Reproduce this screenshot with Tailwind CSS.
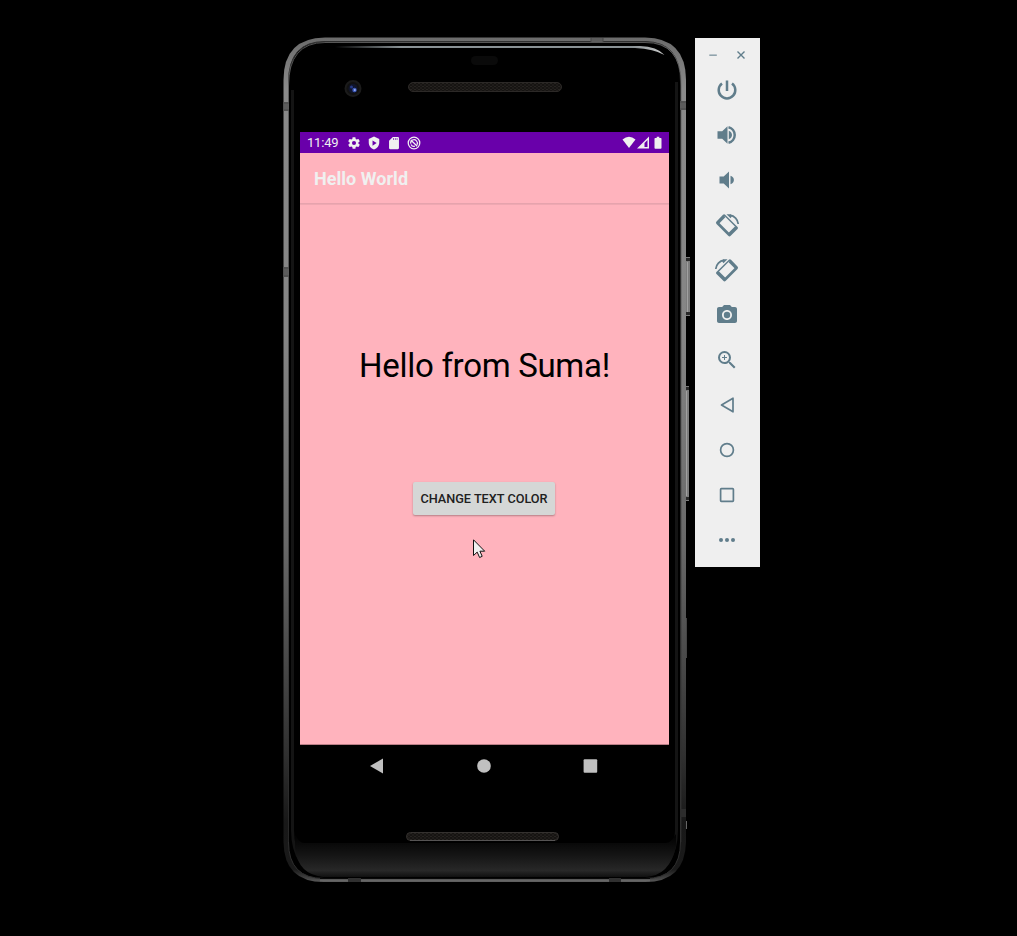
<!DOCTYPE html>
<html lang="en">
<head>
<meta charset="utf-8">
<title>Emulator</title>
<script src="https://cdn.jsdelivr.net/npm/@tailwindcss/browser@4"></script>
</head>
<body class="bg-black h-[936px] overflow-hidden font-['Roboto',sans-serif]">
<main class="flex items-start pl-[283px] pt-[37px]">
  <section class="relative w-[412px] h-[846px] shrink-0 pl-[17px] pt-[95px]">
    <!-- device body -->
    <svg class="absolute left-0 top-0" width="412" height="846" viewBox="283 37 412 846" fill="none">
      <defs>
        <linearGradient id="rim" gradientUnits="userSpaceOnUse" x1="0" y1="38" x2="0" y2="882">
          <stop offset="0" stop-color="#6c6c6c"/><stop offset=".06" stop-color="#8a8a8a"/><stop offset=".35" stop-color="#858585"/>
          <stop offset=".6" stop-color="#686868"/><stop offset=".85" stop-color="#303030"/><stop offset=".93" stop-color="#181818"/><stop offset=".985" stop-color="#1a1a1a"/><stop offset=".996" stop-color="#444"/><stop offset="1" stop-color="#5c5c5c"/>
        </linearGradient>
        <linearGradient id="inner" gradientUnits="userSpaceOnUse" x1="0" y1="42" x2="0" y2="842">
          <stop offset="0" stop-color="#747474"/><stop offset=".5" stop-color="#606060"/><stop offset="1" stop-color="#222"/>
        </linearGradient>
        <linearGradient id="chin" x1="0" y1="0" x2="0" y2="1">
          <stop offset="0" stop-color="#000"/><stop offset=".25" stop-color="#0a0a0a"/><stop offset=".5" stop-color="#151515"/><stop offset=".85" stop-color="#282828"/><stop offset="1" stop-color="#101010"/>
        </linearGradient>
        <linearGradient id="shine" gradientUnits="userSpaceOnUse" x1="335" y1="0" x2="665" y2="0">
          <stop offset="0" stop-color="#8a9296" stop-opacity="0"/><stop offset=".2" stop-color="#8a9296"/><stop offset=".9" stop-color="#8a9296"/><stop offset="1" stop-color="#ccc"/>
        </linearGradient>
        <pattern id="mesh" width="4" height="3" patternUnits="userSpaceOnUse"><rect width="4" height="3" fill="#161412"/><path d="M0 1h2M2 2.500h2" stroke="#272421"/></pattern>
        <clipPath id="body"><path d="M325 37.500H645Q686 38 686 80V842Q685 882 645 882H324Q284 882 283.500 842V80Q283.500 38 325 37.500Z"/></clipPath>
      </defs>
      <path d="M684 257h6v59h-6zM684 386h5v115h-5z" fill="#7c7c7c"/>
      <path d="M687.500 262v50M686.500 391v105" stroke="#a0a0a0"/>
      <path d="M686 258h4v3h-4zM686 312h4v3h-4zM685 387h4v3h-4zM685 497h4v3h-4z" fill="#282828"/>
      <path d="M686.500 618v40" stroke="#444"/><path d="M686.500 821v8" stroke="#666"/>
      <g clip-path="url(#body)">
        <path d="M283 37H687V883H283Z" fill="url(#rim)"/>
        <path d="M325 41.500H645Q680.500 42 680.500 82V842Q680.500 878.500 645 878.500H324Q288.500 878.500 288.500 842V82Q288.500 41.500 325 41.500Z" fill="#000" stroke="#303030"/>
        <path d="M325 42.500H645Q681.500 42 681.500 86V842" stroke="url(#inner)" stroke-opacity=".75"/>
        <path d="M325 42.500Q288.500 42.500 288.500 86V842" stroke="url(#inner)" stroke-opacity=".7"/>
        <path d="M292.500 90V830Q293 870 324 875.500M676.500 82V830Q676 870 645 875.500" stroke="#141414" stroke-width="3"/>
        <path d="M295 834Q299 843 304 843H666Q671 843 676 834V846Q670 876 645 877H324Q298 875 295 848Z" fill="url(#chin)"/>
        <path d="M320 878.500H650" stroke="#080808"/>
        <path d="M320 880.500H650" stroke="#666" stroke-width="2"/>
        <path d="M283 102h6v9h-6zM680 101h6v9h-6zM283 267h6v10h-6zM591 38h12v4h-12z" fill="#5c5c5c"/>
        <path d="M680 809h6v8h-6z" fill="#2c2c2c"/>
        <path d="M283 103h6M283 110h6M680 102h6M680 109h6M283 268h6M283 276h6M591 38v4M603 38v4" stroke="#484848"/>
        <path d="M348 878h13v4h-13zM609 878h12v4h-12z" fill="#303030"/>
      </g>
      <path d="M335 46H640Q657 46.500 664.500 55Q654 49 635 48H335Z" fill="url(#shine)"/>
      <rect x="471" y="56" width="27" height="9" rx="4.500" fill="#0a0a0a"/>
      <circle cx="353" cy="88.500" r="7.500" fill="#111" stroke="#1b1b1b" stroke-width="2"/>
      <circle cx="353" cy="88.500" r="4.500" fill="#10152c"/><circle cx="351.500" cy="87" r="1.500" fill="#253985"/><circle cx="354.500" cy="90" r="2.200" fill="#3f5bb8"/><circle cx="354.800" cy="90" r="1" fill="#9bb2ff"/>
      <rect x="408.500" y="82.500" width="153" height="9" rx="4.500" fill="url(#mesh)" stroke="#2c2927"/>
      <rect x="406.500" y="832.500" width="152" height="8" rx="4" fill="url(#mesh)" stroke="#34312f"/><path d="M410 840.500H555" stroke="#565454"/>
    </svg>

    <!-- screen -->
    <div class="relative w-[369px] flex flex-col">
      <div class="h-[21px] bg-[#6900aa] flex items-center justify-between text-[#f0f0f0]">
        <div class="flex items-center pl-[7px]">
          <span class="w-[40px] text-[13px] leading-[21px] tracking-[-0.2px]">11:49</span>
          <div class="flex gap-[6px] items-center">
            <svg width="14" height="14" viewBox="0 0 24 24" fill="currentColor"><path d="M19.430 12.980c.04-.32.07-.64.07-.98s-.03-.66-.07-.98l2.110-1.650c.19-.15.24-.42.12-.64l-2-3.460c-.12-.22-.39-.3-.61-.22l-2.490 1c-.52-.4-1.080-.73-1.690-.98l-.38-2.650A.49.49 0 0014 2h-4c-.25 0-.46.18-.49.42l-.38 2.650c-.61.25-1.170.59-1.690.98l-2.490-1c-.23-.09-.49 0-.61.22l-2 3.460c-.13.22-.07.49.12.64l2.110 1.650c-.04.32-.07.65-.07.98s.03.66.07.98l-2.110 1.650c-.19.15-.24.42-.12.64l2 3.460c.12.22.39.3.61.22l2.490-1c.52.4 1.080.73 1.690.98l.38 2.650c.03.24.24.42.49.42h4c.25 0 .46-.18.49-.42l.38-2.650c.61-.25 1.170-.59 1.690-.98l2.490 1c.23.09.49 0 .61-.22l2-3.460c.12-.22.07-.49-.12-.64l-2.110-1.650zM12 15.500A3.500 3.500 0 1112 8.500a3.500 3.500 0 010 7z"/></svg>
            <svg width="14" height="14" viewBox="0 0 24 24" fill="currentColor" fill-rule="evenodd"><path d="M12 1L3 5v6c0 5.550 3.840 10.740 9 12 5.160-1.260 9-6.450 9-12V5zM9.500 7.500L16.500 12l-7 4.500z"/></svg>
            <svg width="14" height="14" viewBox="0 0 24 24" fill="currentColor" fill-rule="evenodd"><path d="M18.500 1.500h-8.500L3.500 8V20.500c0 1.100.9 2 2 2H18.500c1.100 0 2-.9 2-2V3.500c0-1.100-.9-2-2-2zm-6.500 5h-1.500V4H12v2.500zm3 0h-1.500V4H15v2.500zm3 0h-1.500V4H18v2.500z"/></svg>
            <svg width="14" height="14" viewBox="0 0 24 24" fill="none" stroke="currentColor" stroke-width="2.200"><circle cx="12" cy="12" r="9.900"/><path d="M6.400 13a5.600 5.600 0 0 1 9.800-4.600 5.600 5.600 0 0 1 1 6.600M6.500 7l11 10.500M7 14.500a5.400 5.400 0 0 0 6.500 2.900"/></svg>
          </div>
        </div>
        <svg width="40" height="14" viewBox="622 135.500 40 14" fill="currentColor" class="mr-[7px]">
          <path d="M622.500 139Q629 133.500 635.500 139L629 147.500Z"/>
          <path fill-rule="evenodd" d="M637 148L649 136V148ZM644.500 146.500H647.500V139.500L644.500 142.500Z"/>
          <path d="M656.700 136.200h2.600v1.300h1.400q.8 0 .8.800v9q0 1-.8 1h-5.400q-.8 0-.8-1v-9q0-.8.8-.8h1.400z"/>
        </svg>
      </div>
      <div class="h-[51px] bg-[#ffb3bd] flex items-center pl-[14px] border-b border-[#e6a3ad]">
        <h1 class="text-[18px] font-bold text-[#f0f0f0] leading-none pt-[2px] tracking-[0.03px] whitespace-nowrap">Hello World</h1>
      </div>
      <div class="h-[541px] bg-[#ffb3bd] border-t border-t-[#efa8b2] border-b border-b-[#b97e86] flex flex-col items-center pt-[141px]">
        <p class="text-[33px] leading-[40px] tracking-[-0.3px] text-black whitespace-nowrap">Hello from Suma!</p>
        <button class="mt-[96px] mr-px w-[142px] h-[33px] rounded-[2px] bg-[#d5d7d6] text-[#202020] text-[12.700px] font-medium shadow-[0_1px_2px_rgba(0,0,0,0.3)] whitespace-nowrap">CHANGE TEXT COLOR</button>
      </div>
      <nav class="h-[42px] flex items-center justify-between pl-[69px] pr-[71px] text-[#c0c0c0]">
        <svg width="16" height="16" viewBox="0 0 16 16" fill="currentColor"><path d="M1 8L14 .5V15.500Z"/></svg>
        <svg width="16" height="16" viewBox="0 0 16 16" fill="currentColor"><circle cx="8" cy="8" r="6.800"/></svg>
        <svg width="16" height="16" viewBox="0 0 16 16" fill="currentColor"><rect x="1.600" y="1.200" width="13.600" height="13.600" rx="1"/></svg>
      </nav>
    </div>
    <!-- pointer -->
    <svg class="absolute left-[190px] top-[502px]" width="14" height="21" viewBox="0 0 14 21"><path d="M.5.8V16.500L4.200 13.100 6.600 18.500 9.200 17.300 6.900 12.200H11.700Z" fill="#f0f0f0" stroke="#111" stroke-width="1"/></svg>
  </section>

  <aside class="mt-px w-[65px] h-[529px] bg-[#efefef] text-[#607d8b] flex flex-col items-center">
    <div class="h-[29px] pt-[12px] flex gap-[18px] mr-[2px]">
      <svg width="10" height="10" viewBox="0 0 10 10" stroke="currentColor" stroke-width="1.500" opacity=".7"><path d="M1.300 5.200h7.500"/></svg>
      <svg width="10" height="10" viewBox="0 0 10 10" stroke="currentColor" stroke-width="1.400"><path d="M1.500 1.600l7 7M8.500 1.600l-7 7"/></svg>
    </div>
    <div class="flex flex-col gap-[21px] mt-[11px] ml-[-1px]">
      <svg width="24" height="24" viewBox="0 0 24 24" fill="none" stroke="currentColor" stroke-width="2.500"><path d="M12 2.500V13M7 5.500a8.300 8.300 0 1 0 10 0"/></svg>
      <svg width="24" height="24" viewBox="0 0 24 24" fill="currentColor"><path d="M2.500 8.200v7.600h4.700l5.300 5V3.200l-5.300 5zM17 12c0-1.900-1-3.400-3.200-4.300v8.600c2.200-.9 3.200-2.400 3.200-4.300z"/><path d="M13.500 4.200a8 8 0 0 1 0 15.600" fill="none" stroke="currentColor" stroke-width="2.500"/></svg>
      <svg width="24" height="24" viewBox="0 0 24 24" fill="currentColor"><path d="M4.500 8.500v7h4.200l5.300 5V3.500L8.700 8.500zM18.900 12c0-1.900-1-3.500-3.400-4.200v8.400c2.400-.7 3.400-2.300 3.400-4.200z"/></svg>
      <svg width="24" height="24" viewBox="0 0 24 24"><path fill="currentColor" fill-rule="evenodd" d="M8 1.700Q9.200.7 10.400 1.900L22.600 14.100Q23.500 15 22.500 16L15.700 22.800Q14.500 24 13.200 22.700L1.500 11Q.3 9.700 1.500 8.400ZM9.700 3.200L3.600 9.300 14.600 20.300 20.700 14.200Z"/><path d="M2 9.200L8.700 2.500 10.400 4.200 3.700 10.900ZM13.600 19.800L20.200 13.200 22 15 15.300 21.700Z" fill="currentColor"/><path d="M15 2.200A9.800 9.800 0 0 1 23.200 11" fill="none" stroke="currentColor" stroke-width="1.700"/><path d="M11.500 1.300L15.500 1.200 17 3 15.600 5.300Z" fill="currentColor"/></svg>
      <svg width="24" height="24" viewBox="0 0 24 24"><g transform="translate(24 0) scale(-1 1)"><path fill="currentColor" fill-rule="evenodd" d="M8 1.700Q9.200.7 10.400 1.900L22.600 14.100Q23.500 15 22.500 16L15.700 22.800Q14.500 24 13.200 22.700L1.500 11Q.3 9.700 1.500 8.400ZM9.700 3.200L3.600 9.300 14.600 20.300 20.700 14.200Z"/><path d="M2 9.200L8.700 2.500 10.400 4.200 3.700 10.900ZM13.600 19.800L20.200 13.200 22 15 15.300 21.700Z" fill="currentColor"/><path d="M15 2.200A9.800 9.800 0 0 1 23.200 11" fill="none" stroke="currentColor" stroke-width="1.700"/><path d="M11.500 1.300L15.500 1.200 17 3 15.600 5.300Z" fill="currentColor"/></g></svg>
      <svg width="24" height="24" viewBox="0 0 24 24" fill="currentColor"><circle cx="12" cy="12" r="3.200"/><path d="M9 2L7.170 4H4c-1.100 0-2 .9-2 2v12c0 1.100.9 2 2 2h16c1.100 0 2-.9 2-2V6c0-1.100-.9-2-2-2h-3.170L15 2H9zm3 15c-2.760 0-5-2.240-5-5s2.240-5 5-5 5 2.240 5 5-2.240 5-5 5z"/></svg>
      <svg width="24" height="24" viewBox="0 0 24 24" fill="currentColor"><path d="M15.500 14h-.79l-.28-.27A6.471 6.471 0 0016 9.500 6.500 6.500 0 109.500 16c1.610 0 3.090-.59 4.230-1.570l.27.280v.79l5 4.990L20.490 19l-4.990-5zm-6 0C7.010 14 5 11.990 5 9.500S7.010 5 9.500 5 14 7.010 14 9.500 11.990 14 9.500 14zm2.500-4h-2v2H9v-2H7V9h2V7h1v2h2v1z"/></svg>
      <svg width="24" height="24" viewBox="0 0 24 24" fill="none" stroke="currentColor" stroke-width="1.700" stroke-linejoin="round"><path d="M6.500 12L18 5.200V18.800Z"/></svg>
      <svg width="24" height="24" viewBox="0 0 24 24" fill="none" stroke="currentColor" stroke-width="1.700"><circle cx="12" cy="12" r="6.400"/></svg>
      <svg width="24" height="24" viewBox="0 0 24 24" fill="none" stroke="currentColor" stroke-width="1.700"><rect x="5.600" y="5.600" width="12.800" height="12.800" rx=".8"/></svg>
      <svg width="24" height="24" viewBox="0 0 24 24" fill="currentColor"><circle cx="6" cy="12" r="2"/><circle cx="12" cy="12" r="2"/><circle cx="18" cy="12" r="2"/></svg>
    </div>
  </aside>
</main>
</body>
</html>
